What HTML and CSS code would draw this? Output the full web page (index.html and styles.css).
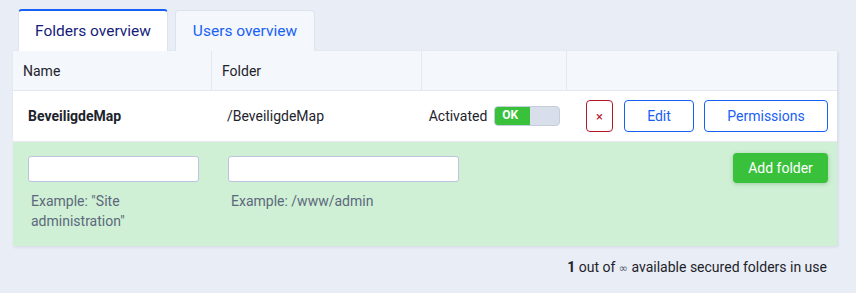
FILE: index.html
```html
<!DOCTYPE html>
<html>
<head>
<meta charset="utf-8">
<link rel="stylesheet" href="styles.css">
</head>
<body>
<div class="page">
  <div class="tabs">
    <div class="tab active">Folders overview</div>
    <div class="tab">Users overview</div>
  </div>
  <div class="card">
    <div class="row head">
      <div class="c c1">Name</div>
      <div class="c c2">Folder</div>
      <div class="c c3"></div>
      <div class="c c4"></div>
    </div>
    <div class="row item">
      <div class="c c1 bold">BeveiligdeMap</div>
      <div class="c c2">/BeveiligdeMap</div>
      <div class="c c3 status">
        <span>Activated</span>
        <span class="toggle"><span class="on">OK</span><span class="off"></span></span>
      </div>
      <div class="c c4 actions">
        <button class="btn del">×</button>
        <button class="btn edit">Edit</button>
        <button class="btn perm">Permissions</button>
      </div>
    </div>
    <div class="form">
      <div class="field f1">
        <input type="text" class="inp">
        <div class="hint">Example: "Site administration"</div>
      </div>
      <div class="field f2">
        <input type="text" class="inp">
        <div class="hint">Example: /www/admin</div>
      </div>
      <button class="add">Add folder</button>
    </div>
  </div>
  <div class="footer"><b>1</b> out of <span class="inf">∞</span> available secured folders in use</div>
</div>
</body>
</html>
```

FILE: styles.css
```css
html, body { margin: 0; padding: 0; }
body {
  background: #e9edf5;
  font-family: Roboto, "Liberation Sans", sans-serif;
  color: #1d232c;
  font-size: 14px;
}
.page { padding: 9px 19px 0 13px; }
.tabs { display: flex; gap: 7px; padding-left: 5px; height: 42px; }
.tab {
  box-sizing: border-box;
  height: 41px;
  margin-top: 1px;
  padding: 0 16px;
  display: flex;
  align-items: center;
  font-size: 15.5px;
  color: #1760f5;
  background: #f4f7fb;
  border: 1px solid #dde3ee;
  border-bottom: none;
  border-radius: 4px 4px 0 0;
  width: 140px;
  justify-content: center;
}
.tab.active {
  height: 42px;
  margin-top: 0;
  width: 150px;
  color: #141b7a;
  background: #fff;
  border: 1px solid #dde3ee;
  border-top: 2px solid #1760f5;
  border-bottom: none;
}
.card {
  background: #fff;
  box-shadow: 1px 1px 3px rgba(40, 60, 100, 0.12);
}
.row { display: flex; }
.c { box-sizing: border-box; display: flex; align-items: center; }
.c1 { width: 199px; }
.c2 { width: 210px; }
.c3 { width: 145px; }
.c4 { flex: 1; }
.head { background: #f4f7fb; height: 39px; border-bottom: 1px solid #e1e7f0; }
.head .c { padding-left: 10px; border-right: 1px solid #e4e9f1; }
.head .c4 { border-right: none; }
.item { height: 50px; }
.item .c1, .item .c2 { padding-left: 15px; }
.bold { font-weight: 700; }
.status { justify-content: center; gap: 7px; }
.toggle {
  display: flex;
  width: 66px;
  height: 20px;
  box-sizing: border-box;
  border: 1px solid #c5cede;
  border-radius: 4px;
  overflow: hidden;
  background: #d8deea;
}
.toggle .on {
  width: 35px;
  background: #3ac13c;
  color: #fff;
  font-weight: 700;
  font-size: 12px;
  display: flex;
  align-items: center;
  padding-left: 7px;
  box-sizing: border-box;
  line-height: 1;
  padding-bottom: 3px;
}
.actions { justify-content: flex-end; padding-right: 9px; gap: 10px; }
.btn {
  font-family: Roboto, "Liberation Sans", sans-serif;
  font-size: 14px;
  height: 32px;
  background: #fff;
  border: 1px solid #1760f5;
  color: #1760f5;
  border-radius: 4px;
  padding: 0;
  cursor: pointer;
}
.btn.del { width: 27px; border-color: #b5172a; color: #b5172a; font-size: 13px; margin-right: 1px; }
.btn.edit { width: 70px; }
.btn.perm { width: 124px; }
.form {
  background: #cff0d5;
  height: 105px;
  display: flex;
  align-items: flex-start;
  padding: 14px 9px 0 15px;
  box-sizing: border-box;
  border-top: 1px solid #e4e9f1;
}
.field { display: flex; flex-direction: column; }
.f1 { width: 171px; margin-right: 29px; }
.f2 { width: 231px; }
.inp {
  box-sizing: border-box;
  width: 100%;
  height: 26px;
  border: 1px solid #bcc3e0;
  border-radius: 3px;
  background: #fff;
  margin: 0;
}
.hint {
  color: #5c687c;
  line-height: 20px;
  padding: 9px 3px 0;
}
.add {
  margin-left: auto;
  margin-top: -3px;
  height: 30px;
  width: 95px;
  background: #3ac13c;
  border: none;
  border-radius: 4px;
  color: #fff;
  font-family: Roboto, "Liberation Sans", sans-serif;
  font-size: 14px;
  box-shadow: 0 1px 4px rgba(40, 120, 40, 0.3);
}
.footer { text-align: right; padding: 11px 10px 0 0; line-height: 20px; }
.inf { font-family: "DejaVu Sans", sans-serif; font-size: 11px; color: #555d6a; }
```
